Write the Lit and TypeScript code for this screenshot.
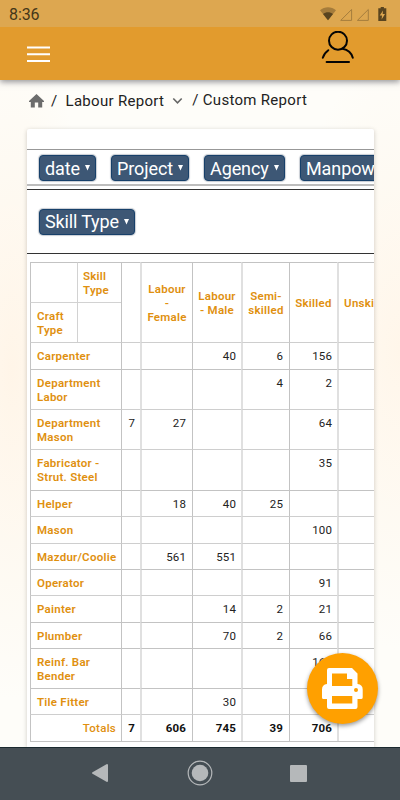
import { LitElement, html, css } from "lit";
import { customElement } from "lit/decorators.js";
import { classMap } from "lit/directives/class-map.js";

interface Row {
  name: string[];
  values: string[];
  height: number;
  soft?: boolean;
}

const ROWS: Row[] = [
  { name: ["Carpenter"], values: ["", "", "40", "6", "156"], height: 27, soft: true },
  { name: ["Department", "Labor"], values: ["", "", "", "4", "2"], height: 40 },
  { name: ["Department", "Mason"], values: ["7", "27", "", "", "64"], height: 40, soft: true },
  { name: ["Fabricator -", "Strut. Steel"], values: ["", "", "", "", "35"], height: 41, soft: true },
  { name: ["Helper"], values: ["", "18", "40", "25", ""], height: 26 },
  { name: ["Mason"], values: ["", "", "", "", "100"], height: 27, soft: true },
  { name: ["Mazdur/Coolie"], values: ["", "561", "551", "", ""], height: 26, soft: true },
  { name: ["Operator"], values: ["", "", "", "", "91"], height: 26 },
  { name: ["Painter"], values: ["", "", "14", "2", "21"], height: 27, soft: true },
  { name: ["Plumber"], values: ["", "", "70", "2", "66"], height: 26 },
  { name: ["Reinf. Bar", "Bender"], values: ["", "", "", "", "169"], height: 40 },
  { name: ["Tile Fitter"], values: ["", "", "30", "", ""], height: 26 },
  { name: ["Totals"], values: ["7", "606", "745", "39", "706"], height: 27, soft: true },
];

const HEADS = [[], ["Labour", "-", "Female"], ["Labour", "- Male"], ["Semi-", "skilled"], ["Skilled"], ["Unskilled"]];

const lines = (t: string[]) => t.map((l) => html`<div>${l}</div>`);

@customElement("pivot-table")
export class PivotTable extends LitElement {
  static styles = css`
    :host { display: block; margin: 8px 0 0 3px; font-size: 11.5px; line-height: 14px; color: #222; letter-spacing: 0.15px; }
    .row, .head { display: grid; grid-template-columns: 91px 19px 52px 49px 48px 48px 60px; width: 367px; }
    .head { height: 80px; }
    .corner { display: grid; grid-template-columns: 47px 44px; grid-template-rows: 40px 40px; }
    .cell, .corner > div { box-sizing: border-box; border-left: 1px solid #c3c3c3; border-top: 1px solid #c3c3c3; padding: 6px 5px 0 6px; white-space: nowrap; }
    .corner > div:nth-child(n + 3) { border-top-color: #d2d2d2; }
    .corner > div:nth-child(even) { border-left-color: #d2d2d2; padding-left: 5px; }
    .head .cell { display: flex; flex-direction: column; justify-content: center; text-align: center; padding: 0; }
    .head .cell:last-child { padding-left: 2px; }
    .cell:nth-child(3), .cell:nth-child(5), .cell:nth-child(7) { border-left: 2px solid #e0e0e0; }
    .soft .cell { border-top-color: #cecece; }
    .name, .head, .corner { color: #e0900f; font-weight: 600; letter-spacing: 0.25px; }
    .row .val { text-align: right; }
    .val:nth-child(3), .val:nth-child(5) { padding-right: 6px; }
    .total { height: 27px; border-bottom: 1px solid #c3c3c3; font-weight: 700; color: #111; }
    .total .name { text-align: right; font-weight: 500; }
  `;
  render() {
    return html`
      <div class="head">
        <div class="corner"><div></div><div>${lines(["Skill", "Type"])}</div><div>${lines(["Craft", "Type"])}</div><div></div></div>
        ${HEADS.map((h) => html`<div class="cell">${lines(h)}</div>`)}
      </div>
      ${ROWS.map((r, i) => html`
        <div class=${classMap({ row: true, soft: !!r.soft, total: i === ROWS.length - 1 })} style="height:${r.height}px">
          <div class="cell name">${lines(r.name)}</div>
          ${[...r.values, ""].map((v) => html`<div class="cell val">${v}</div>`)}
        </div>`)}
    `;
  }
}

@customElement("app-root")
export class AppRoot extends LitElement {
  static styles = css`
    :host { display: flex; flex-direction: column; position: relative; width: 400px; height: 800px; overflow: hidden; font-family: Roboto, sans-serif;
      background: radial-gradient(ellipse 90px 330px at 12px 370px, #fff5e8, rgba(255,248,238,0)), radial-gradient(ellipse 120px 300px at 400px 350px, #fff6ea, rgba(255,248,238,0)), #fefdf9; }
    svg { display: block; }
    .status { height: 27px; flex: none; background: #dda750; display: flex; align-items: center; padding: 0 13px 0 9px; box-sizing: border-box; color: #453719; font-size: 16px; position: relative; z-index: 2; }
    .status span { flex: 1; letter-spacing: -0.1px; padding-top: 1px; }
    .bar { height: 53px; flex: none; background: #e29b2d; display: flex; justify-content: space-between; box-shadow: 0 2px 6px rgba(60,60,70,.55); padding: 0 45px 0 27px; position: relative; z-index: 1; }
    .menu { width: 23px; height: 17px; margin-top: 19px; }
    .user { margin-top: 4px; }
    .crumbs { height: 48px; flex: none; display: flex; align-items: center; padding: 0 0 7px 28px; box-sizing: border-box; color: #222; font-size: 15px; letter-spacing: 0.3px; white-space: pre; }
    .c1 { margin-left: 6px; } .c2 { margin-left: 8px; } .chev { margin-left: 8px; } .c3 { margin-left: 9px; }
    .crumbs span:last-child { margin-top: -1px; }
    .card { width: 347px; flex: 1; margin: 1px 0 0 27px; background: #fff; box-shadow: 0 1px 4px rgba(60,50,40,.25); overflow: hidden; border-radius: 2px 2px 0 0; }
    .filters { margin-top: 20px; height: 37px; box-sizing: border-box; border-top: 1px solid #989898; border-bottom: 2px solid #bdbdbd; display: flex; padding: 5px 0 0 12px; gap: 15px; }
    .chip { flex: none; height: 26px; box-sizing: border-box; background: #3d5775; border: 1px solid #17406a; border-radius: 4px; color: #fff; font-size: 18px; letter-spacing: -0.1px; line-height: 25px; padding: 0 5px; box-shadow: 0 0 1px 1px #c8cdd3; display: flex; align-items: center; justify-content: space-between; white-space: nowrap; }
    .w1 { width: 57px; } .w2 { width: 78px; } .w3 { width: 81px; } .w4 { width: 126px; } .w5 { width: 96px; letter-spacing: -0.15px; line-height: 24px; }
    .skill { margin-top: 3px; height: 65px; box-sizing: border-box; border-top: 1px solid #333; border-bottom: 1px solid #333; padding: 19px 0 0 12px; }
    .fab { position: absolute; left: 307px; top: 653px; width: 71px; height: 71px; border-radius: 50%; background: #ffa000; box-shadow: 0 2px 4px rgba(0,0,0,.4); z-index: 3; }
    .nav { flex: none; height: 53px; background: #454e54; border-top: 1px solid #1b2a30; box-sizing: border-box; z-index: 2; padding-left: 88px; display: flex; position: relative; }
  `;

  chip(label: string, cls: string) {
    return html`<div class="chip ${cls}">${label}<svg width="5" height="6"><path d="M0 0H5L2.5 5.6Z" fill="#fff" /></svg></div>`;
  }

  render() {
    return html`
      <div class="status"><span>8:36</span>
        <svg width="70" height="18" viewBox="317 4 70 18">
          <path d="M320 9.2C324.5 5.1 331.5 5.1 336 9.2L328 19.3Z" fill="#a57c3b" />
          <path d="M323 13C326 10.7 330 10.7 333 13L328 19.3Z" fill="#59441f" />
          <path d="M351.6 8.5V19.4H340.7ZM368.3 8.5V19.4H357.4Z" fill="none" stroke="#a57d3d" />
          <path d="M380.7 6h3.2v1.3h2.4v12.8h-8V7.3h2.4Z" fill="#59441f" />
          <path d="M383 9.5L379.7 14.5H382L381.6 18.5L385 13H382.7Z" fill="#dda750" />
        </svg>
      </div>
      <div class="bar">
        <svg class="menu" viewBox="0 0 23 17"><path d="M0 1.5H23M0 8.3H23M0 15H23" stroke="#fff" stroke-width="2" /></svg>
        <svg class="user" width="34" height="34" viewBox="321 31 34 34" fill="none" stroke="#050505" stroke-width="2" stroke-linecap="round">
          <circle cx="338" cy="40.7" r="9" />
          <path d="M328.3 50.2C325.8 52 323.8 54.5 322.8 57.8M342.5 48.8C348 49.8 351.5 53 352.8 57.8" />
          <path d="M326.6 62H349" />
        </svg>
      </div>
      <div class="crumbs">
        <svg width="17" height="16" viewBox="0 0 17 16"><path d="M1 8L8.5 1L16 8V9H14.2V14.5H10.2V9.5H6.8V14.5H2.8V9H1Z" fill="#6c6c6c" /></svg>
        <span class="c1">/</span><span class="c2">Labour Report</span>
        <svg class="chev" width="11" height="8"><path d="M1.3 1.5L5.5 5.8L9.7 1.5" fill="none" stroke="#666" stroke-width="1.6" /></svg>
        <span class="c3">/ Custom Report</span>
      </div>
      <div class="card">
        <div class="filters">${this.chip("date", "w1")}${this.chip("Project", "w2")}${this.chip("Agency", "w3")}${this.chip("Manpower", "w4")}</div>
        <div class="skill">${this.chip("Skill Type", "w5")}</div>
        <pivot-table></pivot-table>
      </div>
      <div class="fab"><svg width="71" height="71" viewBox="307 653 71 71">
        <path fill="#fff" fill-rule="evenodd" d="M329 668H352L357.5 673.5V684Q362.7 684.5 362.7 689.5V697.5Q362.7 699 361 699H357.5V707Q357.5 709 355.5 709H329Q327 709 327 707V699H323.5Q322 699 322 697.5V689.5Q322 684.5 327 684V670Q327 668 329 668ZM332 673.5V686H352.3V679H347V673.5ZM332 696V703.5H352.3V696Z" />
        <circle cx="356" cy="690" r="2" fill="#ffa000" />
      </svg></div>
      <div class="nav"><svg width="225" height="52" viewBox="88 748 225 52" fill="#b5b8ba">
        <path d="M93 773L107 765V781Z" stroke="#b5b8ba" stroke-width="2" stroke-linejoin="round" />
        <circle cx="200" cy="773" r="8.3" /><circle cx="200" cy="773" r="11.8" fill="none" stroke="#b5b8ba" stroke-width="1.2" />
        <rect x="290" y="765" width="17" height="17" rx="1" />
      </svg></div>
    `;
  }
}
